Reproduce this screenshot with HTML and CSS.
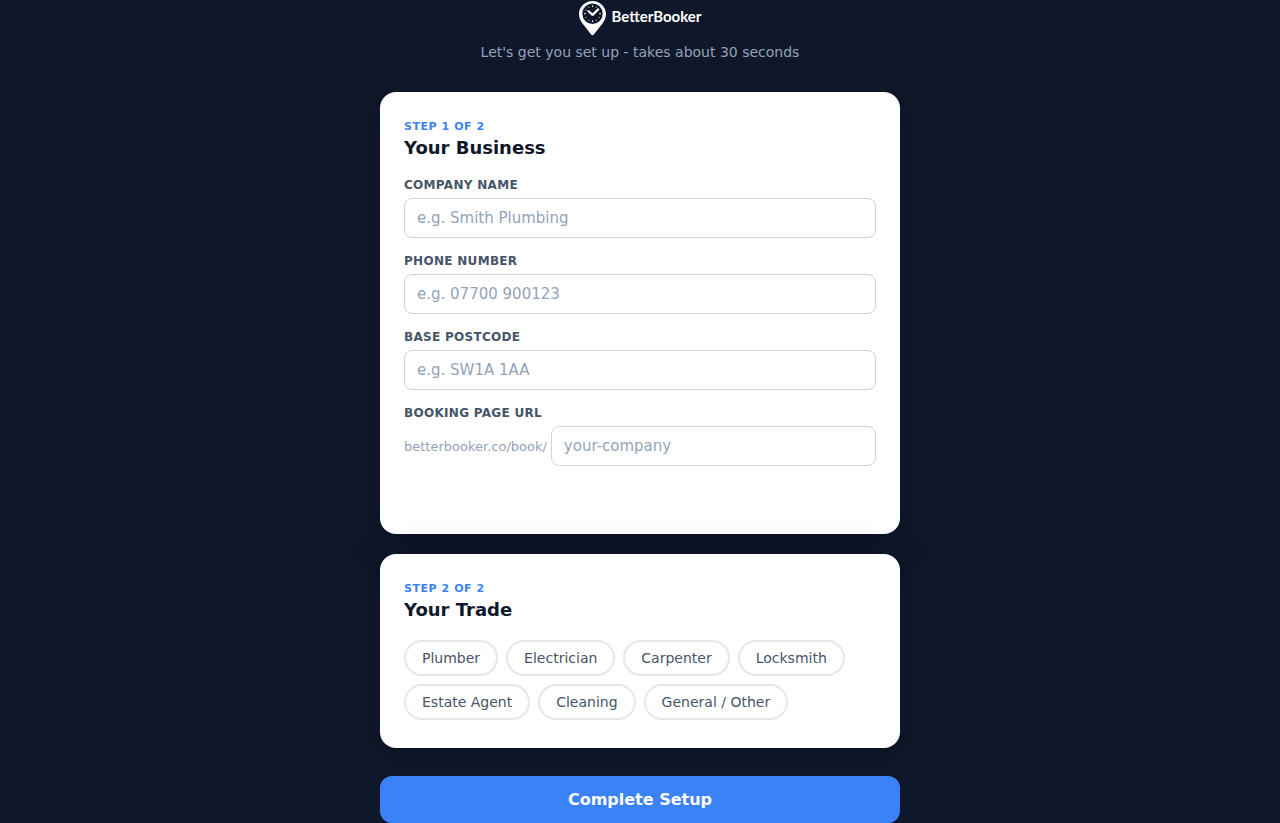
FILE: index.html
```html
<!DOCTYPE html>
<html lang="en">
<head>
<meta charset="utf-8">
<meta name="viewport" content="width=device-width, initial-scale=1">
<title>BetterBooker - Setup</title>
<link rel="stylesheet" href="styles.css">
</head>
<body>
<main class="setup">
  <header class="intro">
    <div class="brand">
      <svg class="brand-pin" viewBox="0 0 27 36" aria-hidden="true">
        <path fill="#fff" d="M13.500 1C6.300 1 0 6.600 0 14c0 3.400 1.300 6.300 3.300 9.200l8.900 11.300c.7.900 1.900.9 2.600 0l8.900-11.300C25.700 20.300 27 17.400 27 14 27 6.600 20.700 1 13.500 1z"/>
        <circle cx="13.500" cy="13.700" r="10.200" fill="#0f172a"/>
        <g fill="none" stroke="#fff" stroke-linecap="round">
          <path stroke-width="1.300" d="M13.500 5.900v.5M13.500 21v.5M5.700 13.700h.5M20.800 13.700h.5"/>
          <path stroke-width="1" d="M9.700 7.100l.1.200M17.300 7.100l-.1.200M6.900 9.900l.2.100M6.900 17.500l.2-.1M9.700 20.300l.1-.2M17.300 20.300l-.1-.2M20.100 17.500l-.2-.1"/>
          <path stroke-width="2.200" stroke-linejoin="round" d="M9.500 11.200l4.100 3.700 5.600-5.500"/>
        </g>
      </svg>
      <span class="brand-name">BetterBooker</span>
    </div>
    <p class="tagline">Let's get you set up - takes about 30 seconds</p>
  </header>

  <form class="setup-form">
    <section class="card">
      <p class="step">Step 1 of 2</p>
      <h2 class="title">Your Business</h2>
      <div class="field">
        <label class="label" for="company">Company Name</label>
        <input class="input" id="company" type="text" placeholder="e.g. Smith Plumbing">
      </div>
      <div class="field">
        <label class="label" for="phone">Phone Number</label>
        <input class="input" id="phone" type="tel" placeholder="e.g. 07700 900123">
      </div>
      <div class="field">
        <label class="label" for="postcode">Base Postcode</label>
        <input class="input" id="postcode" type="text" placeholder="e.g. SW1A 1AA">
      </div>
      <div class="field">
        <label class="label" for="slug">Booking Page URL</label>
        <div class="url-row">
          <span class="url-prefix">betterbooker.co/book/</span>
          <input class="input" id="slug" type="text" placeholder="your-company">
        </div>
        <div class="url-status" aria-live="polite"></div>
      </div>
    </section>

    <section class="card">
      <p class="step">Step 2 of 2</p>
      <h2 class="title">Your Trade</h2>
      <div class="trades">
        <button class="trade" type="button">Plumber</button>
        <button class="trade" type="button">Electrician</button>
        <button class="trade" type="button">Carpenter</button>
        <button class="trade" type="button">Locksmith</button>
        <button class="trade" type="button">Estate Agent</button>
        <button class="trade" type="button">Cleaning</button>
        <button class="trade" type="button">General / Other</button>
      </div>
    </section>

    <button class="submit" type="submit">Complete Setup</button>
  </form>
</main>
</body>
</html>
```
FILE: styles.css
```css
* {
  box-sizing: border-box;
  margin: 0;
  padding: 0;
}

body {
  background: #0f172a;
  color: #0f172a;
  font-family: "DejaVu Sans", sans-serif;
}

.setup {
  width: 100%;
  max-width: 520px;
  margin: 0 auto;
}

.intro {
  margin-bottom: 32px;
  text-align: center;
}

.brand {
  display: flex;
  justify-content: center;
  align-items: center;
  gap: 6px;
  margin-bottom: 8px;
}

.brand-pin {
  width: 27px;
  height: 36px;
}

.brand-name {
  color: #fff;
  font-family: Lato, sans-serif;
  font-size: 15px;
  font-weight: 700;
  line-height: 32px;
  padding-bottom: 4px;
}

.tagline {
  color: #94a3b8;
  font-size: 14px;
  line-height: 16px;
}

.card {
  margin-bottom: 20px;
  padding: 28px 24px;
  border-radius: 16px;
  background: #fff;
  box-shadow: 0 8px 40px rgba(0, 0, 0, 0.2);
}

.step {
  margin-bottom: 4px;
  color: #3b82f6;
  font-size: 11px;
  font-weight: 700;
  line-height: 13px;
  letter-spacing: 0.05em;
  text-transform: uppercase;
}

.title {
  margin-bottom: 20px;
  font-size: 18px;
  font-weight: 700;
  line-height: 21px;
}

.field {
  margin-bottom: 16px;
}

.label {
  display: block;
  margin-bottom: 6px;
  color: #475569;
  font-size: 12px;
  font-weight: 600;
  line-height: 14px;
  letter-spacing: 0.3px;
  text-transform: uppercase;
}

.input {
  width: 100%;
  min-width: 0;
  height: 40px;
  padding: 0 12px;
  border: 1px solid #cbd5e1;
  border-radius: 8px;
  background: #fff;
  color: #0f172a;
  font-family: inherit;
  font-size: 15px;
}

.input::placeholder {
  color: #94a3b8;
}

.url-row {
  display: flex;
  align-items: center;
  gap: 4px;
}

.url-prefix {
  color: #94a3b8;
  font-size: 13px;
  white-space: nowrap;
}

.url-status {
  min-height: 18px;
  margin-top: 6px;
  font-size: 12px;
}

.trades {
  display: flex;
  flex-wrap: wrap;
  gap: 8px;
}

.trade {
  padding: 8px 16px;
  border: 2px solid #e2e8f0;
  border-radius: 20px;
  background: #fff;
  color: #475569;
  font-family: inherit;
  font-size: 14px;
  line-height: 16px;
}

.submit {
  width: 100%;
  margin-top: 8px;
  padding: 14px;
  border: 0;
  border-radius: 12px;
  background: #3b82f6;
  color: #fff;
  font-family: inherit;
  font-size: 16px;
  font-weight: 700;
  line-height: 19px;
}
```
